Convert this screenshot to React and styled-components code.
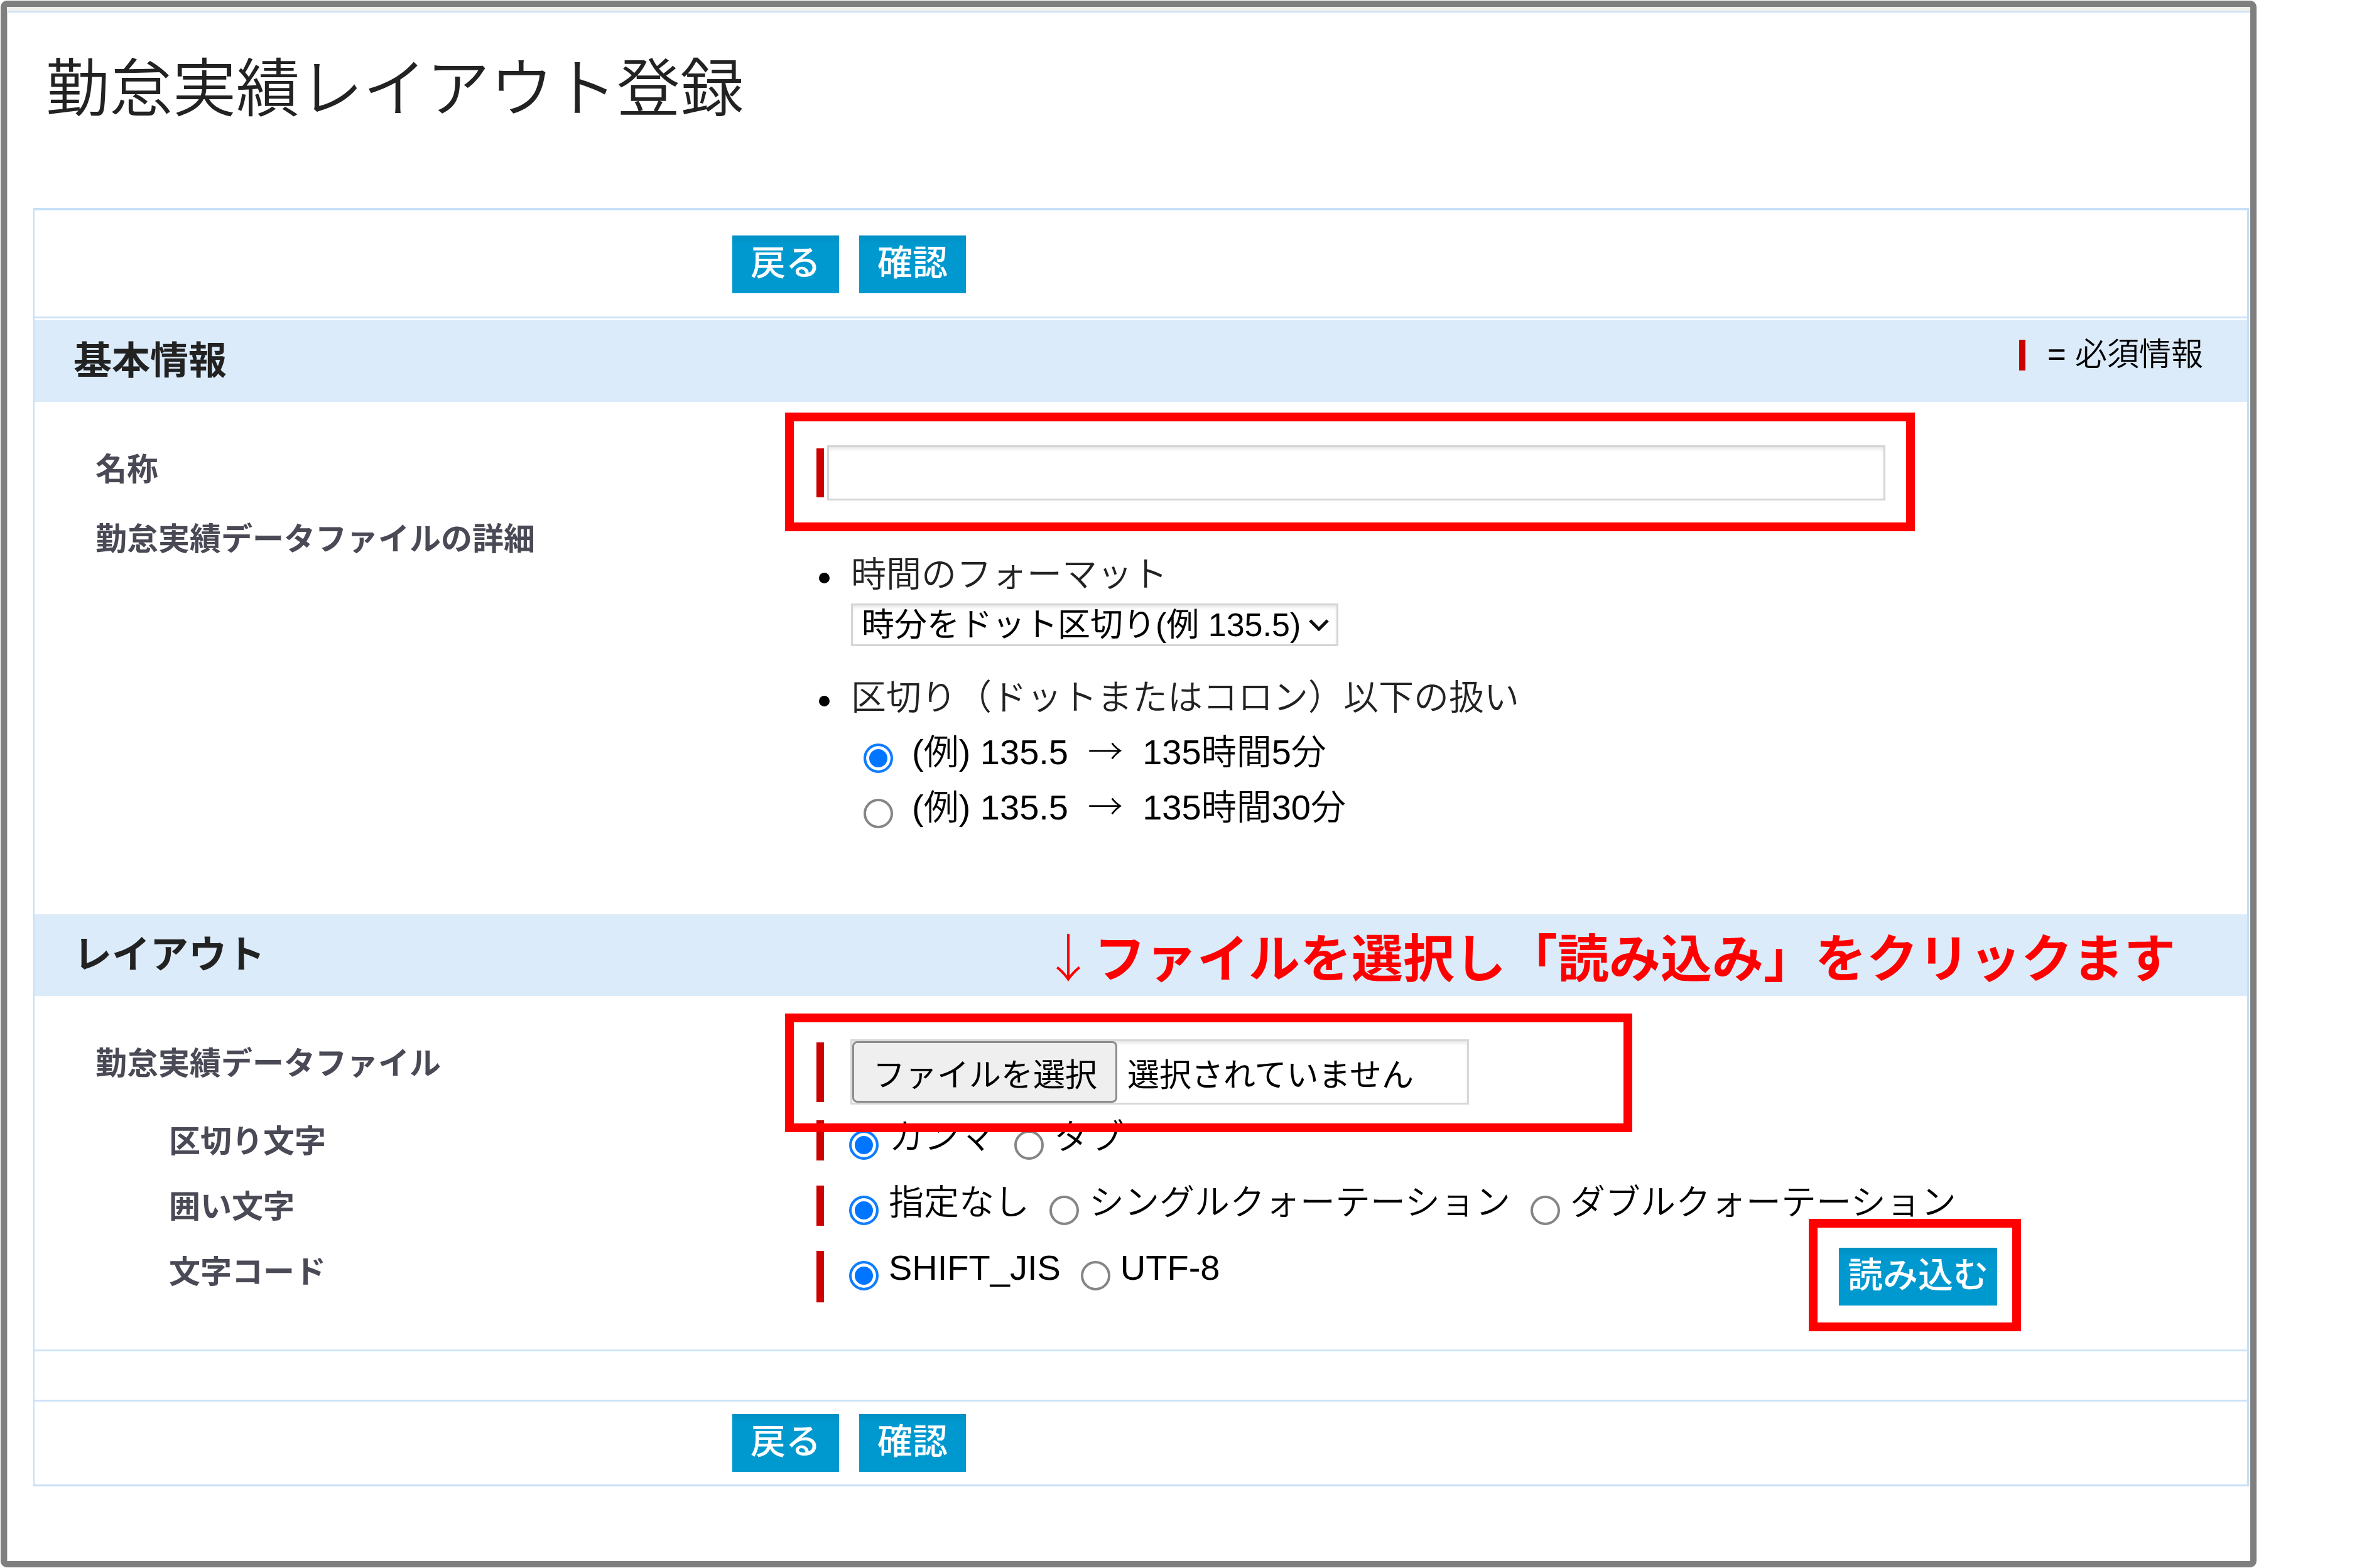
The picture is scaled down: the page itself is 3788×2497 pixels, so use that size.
import React from "react";
import styled, { createGlobalStyle } from "styled-components";

const GlobalStyle = createGlobalStyle`
  * { box-sizing: border-box; }
  body {
    margin: 0;
    background: #fff;
    color: #000;
    font-family: "Liberation Sans", "Noto Sans CJK JP", sans-serif;
    font-size: 56px;
    font-weight: 350;
  }
  button, input, select { font: inherit; }
`;

const Page = styled.div`
  padding: 1px 195px 1px 1px;
`;

const Frame = styled.main`
  min-height: calc(100vh - 2px);
  border: 10px solid #7f7f7f;
  border-radius: 10px;
`;

const TopStrip = styled.div`
  height: 9px;
  background: #eff0ea;
  border-bottom: 2px solid #c9e0f5;
`;

const Content = styled.div`
  min-height: calc(100vh - 31px);
  padding: 0 2px 0 40px;
  border-left: 2px solid #d3e6f8;
`;

const Title = styled.h1`
  margin: 0;
  padding: 62px 0 129px 20px;
  color: #222;
  font-size: 101px;
  font-weight: 350;
  line-height: 120px;
`;

const Panel = styled.form`
  margin: 0;
  border: solid #c5dff7;
  border-width: 4px 3px 3px 2px;
`;

const ActionBar = styled.div`
  display: flex;
  gap: 32px;
  padding: ${(p) => (p.$compact ? "20px" : "40px")} 0 ${(p) => (p.$compact ? "20px" : "37px")} 1111px;
`;

const Divider = styled.hr`
  height: 3px;
  margin: 0 0 ${(p) => p.$after || 0}px;
  border: 0;
  background: #cfe3f8;
`;

const Button = styled.button`
  height: 92px;
  padding: 0 ${(p) => (p.$tight ? 14 : 29)}px 4px;
  border: 0;
  border-radius: 0;
  background: linear-gradient(#008fc2, #0099cf 14px);
  color: #fff;
  font-weight: 500;
  line-height: 88px;
  white-space: nowrap;
`;

const SectionHeader = styled.header`
  display: flex;
  align-items: center;
  justify-content: space-between;
  min-height: 130px;
  padding: 0 70px 0 62px;
  background: #dbebfa;
`;

const SectionTitle = styled.h2`
  margin: 0;
  color: #222;
  font-size: 61px;
  font-weight: 700;
  line-height: 80px;
`;

const Legend = styled.p`
  display: flex;
  align-items: center;
  gap: 35px;
  margin: 0;
  padding-bottom: 20px;
  font-size: 51px;
  line-height: 60px;
`;

const LegendMark = styled.span`
  width: 10px;
  height: 49px;
  background: #c00;
`;

const Callout = styled.p`
  margin: 0 44px 0 0;
  color: #f00;
  font-family: "Noto Sans CJK JP", sans-serif;
  font-size: 82px;
  font-weight: 700;
  line-height: 100px;
  white-space: nowrap;
`;

const ThinArrow = styled.span`
  font-family: "Noto Sans CJK JP", sans-serif;
  font-weight: 300;
`;

const SectionBody = styled.div`
  padding: 69px 0 ${(p) => p.$bottom}px;
`;

const Row = styled.div`
  display: grid;
  grid-template-columns: 1245px 1fr;
  height: ${(p) => (p.$height ? `${p.$height}px` : "auto")};
  margin-top: ${(p) => p.$gap || 0}px;
`;

const Label = styled.label`
  padding: ${(p) => (p.$nested ? "4px 0 0 214px" : "9px 0 0 97px")};
  color: #4a4a56;
  font-size: 50px;
  font-weight: 700;
  line-height: 60px;
`;

const Field = styled.div`
  display: flex;
  align-items: stretch;
  min-width: 0;
`;

const RequiredBar = styled.span`
  flex: none;
  align-self: ${(p) => (p.$height ? "center" : "stretch")};
  width: 12px;
  height: ${(p) => (p.$height ? `${p.$height}px` : "auto")};
  margin-right: ${(p) => p.$gap}px;
  background: #c00;
`;

/* Red outline laid over the control that it draws attention to. */
const Highlighted = styled.div`
  position: relative;
  display: flex;
  flex: 0 1 auto;

  &::after {
    content: "";
    position: absolute;
    z-index: 1;
    inset: ${(p) => p.$inset};
    border: 14px solid #f00;
    pointer-events: none;
  }
`;

const TextInput = styled.input`
  width: 1685px;
  min-width: 0;
  height: 88px;
  padding: 0 14px;
  border: 3px solid #d5d5d5;
  border-radius: 0;
  background: #fff;
  box-shadow: inset 0 4px 6px -2px #ddd;
`;

const DetailList = styled.ul`
  margin: 61px 0 0;
  padding: 0;
  list-style: none;
`;

const DetailItem = styled.li`
  display: flex;
  align-items: flex-start;
  margin-bottom: ${(p) => p.$after || 0}px;

  &::before {
    content: "";
    flex: none;
    width: 17px;
    height: 17px;
    margin: 31px 34px 0 4px;
    border-radius: 50%;
    background: #000;
  }
`;

const DetailHeading = styled.div`
  color: #222;
  line-height: 68px;
`;

const SelectBox = styled.div`
  position: relative;
  display: inline-flex;
  margin-top: 12px;

  svg {
    position: absolute;
    top: 24px;
    right: 14px;
    width: 34px;
    height: 20px;
    pointer-events: none;
  }
`;

const Select = styled.select`
  appearance: none;
  height: 68px;
  padding: 0 56px 0 14px;
  border: 3px solid #d5d5d5;
  border-radius: 0;
  background: #fff;
  box-shadow: inset 0 4px 6px -2px #ddd;
  color: #000;
  font-size: 52px;
  font-weight: 400;
  line-height: 62px;
`;

const Examples = styled.div`
  padding: 11px 0 0 20px;
`;

const ChoiceLabel = styled.label`
  display: flex;
  align-items: center;
  gap: ${(p) => (p.$wide ? 30 : 16)}px;
  height: ${(p) => (p.$wide ? 88 : 64)}px;
  white-space: nowrap;
`;

const ChoiceText = styled.span`
  padding-bottom: 10px;
  line-height: 60px;
`;

const Radio = styled.input`
  appearance: none;
  flex: none;
  width: 47px;
  height: 47px;
  margin: 14px 0 0;
  border: 4px solid #858585;
  border-radius: 50%;
  background: #fff;

  &:checked {
    border-color: #0f7dff;
    background: #0075ff;
    box-shadow: inset 0 0 0 5px #fff;
  }
`;

const Choices = styled.div`
  display: flex;
  align-items: flex-start;
  gap: 32px;
`;

const FilePicker = styled.label`
  position: relative;
  display: flex;
  align-items: center;
  width: 985px;
  height: 104px;
  border: 3px solid #d8d8d8;
  box-shadow: inset 0 4px 6px -2px #ddd;
  font-size: 51px;
  font-weight: 400;
  white-space: nowrap;

  input {
    position: absolute;
    inset: 0;
    opacity: 0;
  }
`;

const FileButton = styled.span`
  align-self: stretch;
  margin-right: 16px;
  padding: 9px 29px 0 30px;
  border: 3px solid #8c8c8c;
  border-radius: 8px;
  background: #efefef;
  line-height: 86px;
`;

const FileStatus = styled.span`
  padding-top: 12px;
  line-height: 86px;
`;

const LoadArea = styled.div`
  display: flex;
  align-items: center;
  margin: -5px 398px -5px auto;
`;

const Spacer = styled.div`
  height: 77px;
`;

function Choice({ name, wide, checked, children }) {
  return (
    <ChoiceLabel $wide={wide}>
      <Radio type="radio" name={name} defaultChecked={checked} />
      <ChoiceText>{children}</ChoiceText>
    </ChoiceLabel>
  );
}

function Actions({ compact }) {
  return (
    <ActionBar $compact={compact}>
      <Button type="button">戻る</Button>
      <Button type="button">確認</Button>
    </ActionBar>
  );
}

function ChoiceRow({ label, name, options, gap, height = 64, children }) {
  return (
    <Row $gap={gap} $height={height} role="radiogroup" aria-label={label}>
      <Label as="span" $nested>{label}</Label>
      <Field>
        <RequiredBar $gap={40} />
        <Choices>
          {options.map((option, i) => (
            <Choice key={option} name={name} checked={i === 0}>{option}</Choice>
          ))}
        </Choices>
        {children}
      </Field>
    </Row>
  );
}

export default function App() {
  return (
    <Page>
      <GlobalStyle />
      <Frame>
        <TopStrip />
        <Content>
          <Title>勤怠実績レイアウト登録</Title>
          <Panel>
            <Actions />
            <Divider $after={3} />

            <SectionHeader>
              <SectionTitle>基本情報</SectionTitle>
              <Legend>
                <LegendMark />
                <span>= 必須情報</span>
              </Legend>
            </SectionHeader>
            <SectionBody $bottom={124}>
              <Row>
                <Label htmlFor="layout-name">名称</Label>
                <Field>
                  <Highlighted $inset="-52px -47px -49px -50px">
                    <RequiredBar $height={78} $gap={5} />
                    <TextInput id="layout-name" type="text" />
                  </Highlighted>
                </Field>
              </Row>
              <Row $gap={23}>
                <Label as="span">勤怠実績データファイルの詳細</Label>
                <DetailList>
                  <DetailItem $after={48}>
                    <div>
                      <DetailHeading as="label" htmlFor="time-format">時間のフォーマット</DetailHeading>
                      <div>
                        <SelectBox>
                          <Select id="time-format">
                            <option>時分をドット区切り(例 135.5)</option>
                          </Select>
                          <svg viewBox="0 0 34 20" fill="none" stroke="#111" strokeWidth="5">
                            <path d="M3 3l14 14L31 3" />
                          </svg>
                        </SelectBox>
                      </div>
                    </div>
                  </DetailItem>
                  <DetailItem>
                    <div>
                      <DetailHeading>区切り（ドットまたはコロン）以下の扱い</DetailHeading>
                      <Examples>
                        <Choice wide name="fraction" checked>
                          (例) 135.5 &nbsp;<ThinArrow>→</ThinArrow>&nbsp; 135時間5分
                        </Choice>
                        <Choice wide name="fraction">
                          (例) 135.5 &nbsp;<ThinArrow>→</ThinArrow>&nbsp; 135時間30分
                        </Choice>
                      </Examples>
                    </div>
                  </DetailItem>
                </DetailList>
              </Row>
            </SectionBody>

            <SectionHeader>
              <SectionTitle>レイアウト</SectionTitle>
              <Callout>
                <ThinArrow>↓</ThinArrow>ファイルを選択し「読み込み」をクリックます
              </Callout>
            </SectionHeader>
            <SectionBody $bottom={75}>
              <Row>
                <Label htmlFor="data-file">勤怠実績データファイル</Label>
                <Field>
                  <Highlighted $inset="-41px -260px -44px -50px">
                    <RequiredBar $height={95} $gap={42} />
                    <FilePicker>
                      <FileButton>ファイルを選択</FileButton>
                      <FileStatus>選択されていません</FileStatus>
                      <input id="data-file" type="file" />
                    </FilePicker>
                  </Highlighted>
                </Field>
              </Row>
              <ChoiceRow gap={25} label="区切り文字" name="delimiter" options={["カンマ", "タブ"]} />
              <ChoiceRow
                gap={40}
                label="囲い文字"
                name="quote"
                options={["指定なし", "シングルクォーテーション", "ダブルクォーテーション"]}
              />
              <ChoiceRow gap={40} height={82} label="文字コード" name="encoding" options={["SHIFT_JIS", "UTF-8"]}>
                <LoadArea>
                  <Highlighted $inset="-46px -38px -41px -48px">
                    <Button type="button" $tight>読み込む</Button>
                  </Highlighted>
                </LoadArea>
              </ChoiceRow>
            </SectionBody>

            <Divider />
            <Spacer />
            <Divider />
            <Actions compact />
          </Panel>
        </Content>
      </Frame>
    </Page>
  );
}
